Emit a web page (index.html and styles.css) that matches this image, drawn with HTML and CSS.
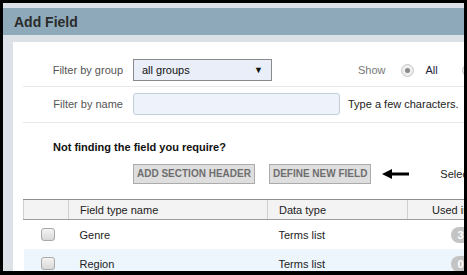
FILE: index.html
```html
<!DOCTYPE html>
<html>
<head>
<meta charset="utf-8">
<link rel="stylesheet" href="styles.css">
</head>
<body>
<div class="frame">
  <div class="dialog">
    <div class="titlebar"><h1 class="title">Add Field</h1></div>
    <div class="panel">
      <div class="row row-group">
        <label class="label">Filter by group</label>
        <div class="select"><span>all groups</span><span class="caret">&#9660;</span></div>
        <div class="show">
          <span class="show-label">Show</span>
          <span class="radio checked"></span>
          <span class="radio-text">All</span>
          <span class="radio"></span>
        </div>
      </div>
      <div class="row row-name">
        <label class="label">Filter by name</label>
        <div class="input"></div>
        <span class="hint">Type a few characters.</span>
      </div>
      <p class="notfound">Not finding the field you require?</p>
      <div class="actions">
        <button class="btn">ADD SECTION HEADER</button>
        <button class="btn">DEFINE NEW FIELD</button>
        <svg class="arrow" width="27" height="10" viewBox="0 0 27 10"><path d="M0 5 L10 0 L10 3.5 L27 3.5 L27 6.5 L10 6.5 L10 10 Z" fill="#000"/></svg>
        <span class="select-all">Select all</span>
      </div>
      <table class="grid">
        <colgroup>
          <col class="w-check">
          <col class="w-name">
          <col class="w-type">
          <col class="w-used">
        </colgroup>
        <thead>
          <tr>
            <th></th>
            <th>Field type name</th>
            <th>Data type</th>
            <th class="c-used">Used in</th>
          </tr>
        </thead>
        <tbody>
          <tr>
            <td class="c-check"><span class="cb"></span></td>
            <td>Genre</td>
            <td>Terms list</td>
            <td class="c-used"><span class="badge">3</span></td>
          </tr>
          <tr class="alt">
            <td class="c-check"><span class="cb"></span></td>
            <td>Region</td>
            <td>Terms list</td>
            <td class="c-used"><span class="badge">0</span></td>
          </tr>
        </tbody>
      </table>
    </div>
  </div>
</div>
</body>
</html>
```

FILE: styles.css
```css
html, body {
  margin: 0;
  padding: 0;
  background: #000;
}
body {
  font-family: "Liberation Sans", Arial, sans-serif;
  font-size: 11px;
  color: #222;
}
.frame {
  width: 467px;
  height: 275px;
  box-sizing: border-box;
  border: 3px solid #000;
  border-bottom-width: 4px;
  overflow: hidden;
}
.dialog {
  width: 700px;
  height: 300px;
  background: #dce1e8;
  padding-top: 5px;
}
.titlebar {
  height: 27px;
  background: #8eaaba;
  display: flex;
  align-items: center;
  padding-left: 11px;
  margin-bottom: 7px;
}
.title {
  margin: 0;
  font-family: "Liberation Sans", Arial, sans-serif;
  font-weight: bold;
  font-size: 14px;
  color: #2b2b2b;
  line-height: 16px;
  padding-top: 1px;
}
.panel {
  margin-left: 10px;
  background: #fff;
  padding-left: 10px;
  height: 260px;
}
.row {
  display: flex;
  align-items: center;
  border-bottom: 1px solid #e8e8e8;
}
.row-group {
  padding: 17px 0 5px;
}
.row-name {
  padding: 6px 0 7px;
}
.label {
  width: 100px;
  text-align: right;
  margin-right: 10px;
  color: #555;
}
.select {
  width: 139px;
  height: 22px;
  box-sizing: border-box;
  border: 1px solid #8a8a8a;
  background: #e9eef8;
  display: flex;
  align-items: center;
  justify-content: space-between;
  padding: 0 8px 0 8px;
  color: #111;
}
.caret {
  font-size: 9px;
  color: #111;
}
.show {
  display: flex;
  align-items: center;
  margin-left: 86px;
}
.show-label {
  color: #777;
  margin-right: 15px;
}
.radio {
  width: 13px;
  height: 13px;
  box-sizing: border-box;
  border-radius: 50%;
  border: 1px solid #c6c6c6;
  background: #eeeeee;
  position: relative;
  flex: none;
}
.radio.checked::after {
  content: "";
  position: absolute;
  left: 3px;
  top: 3px;
  width: 5px;
  height: 5px;
  border-radius: 50%;
  background: #8a8a8a;
}
.radio-text {
  color: #1d1d3d;
  margin: 0 24px 0 12px;
}
.input {
  width: 207px;
  height: 22px;
  box-sizing: border-box;
  border: 1px solid #c4cedb;
  border-radius: 3px;
  background: #eef2fa;
}
.hint {
  margin-left: 8px;
  color: #222;
  white-space: nowrap;
}
.notfound {
  margin: 0;
  padding: 17px 0 0 30px;
  line-height: 14px;
  font-weight: bold;
  color: #111;
}
.actions {
  display: flex;
  align-items: center;
  padding: 10px 0 0 110px;
  height: 20px;
}
.btn {
  font-family: "Liberation Sans", Arial, sans-serif;
  font-size: 10px;
  font-weight: bold;
  color: #6e6e6e;
  background: #dedede;
  border: 1px solid #ababab;
  height: 20px;
  padding: 0 3px;
  margin: 0 14px 0 0;
  line-height: 18px;
}
.arrow {
  margin-left: -3px;
  flex: none;
}
.select-all {
  margin-left: 31px;
  color: #222;
  white-space: nowrap;
}
.grid {
  margin-top: 15px;
  border-collapse: collapse;
  table-layout: fixed;
  width: 600px;
}
.w-check { width: 45px; }
.w-name { width: 199px; }
.w-type { width: 140px; }
.grid th {
  height: 19px;
  background: #f3f3f3;
  border-top: 1px solid #8f8f8f;
  border-bottom: 1px solid #9c9c9c;
  border-left: 1px solid #cfcfcf;
  font-weight: normal;
  text-align: left;
  color: #222;
  padding: 0 0 0 11px;
}
.grid td {
  height: 29px;
  padding: 0 0 0 11px;
  white-space: nowrap;
}
.grid tr.alt td {
  background: #edf5fd;
}
.grid th.c-used {
  padding-left: 24px;
}
.grid td.c-check {
  padding-left: 17px;
}
.cb {
  display: block;
  width: 12px;
  height: 11px;
  border: 1px solid #a9a9a9;
  border-radius: 3px;
  background: linear-gradient(#f4f4f4, #d8d8d8);
}
.grid td.c-used {
  padding-left: 43px;
}
.badge {
  display: inline-block;
  background: #c4c4c4;
  color: #fff;
  font-weight: bold;
  border-radius: 8px;
  padding: 1px 7px;
  line-height: 14px;
}
```
